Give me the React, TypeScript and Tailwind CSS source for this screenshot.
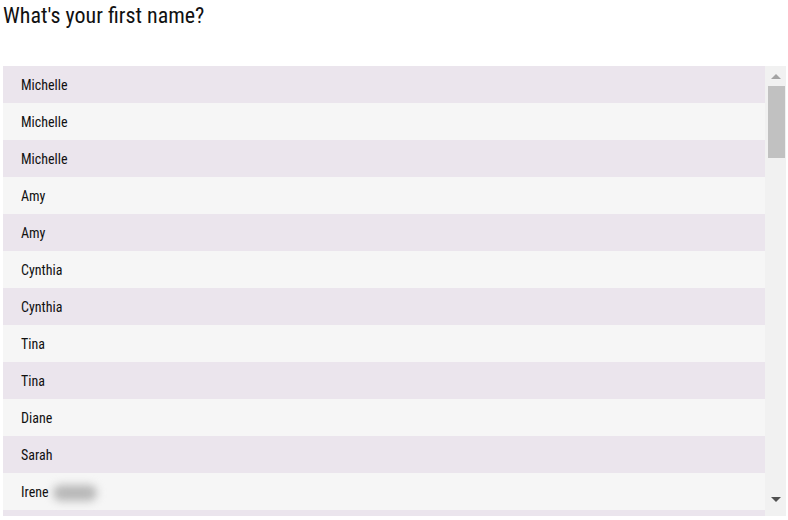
const names = [
  "Michelle",
  "Michelle",
  "Michelle",
  "Amy",
  "Amy",
  "Cynthia",
  "Cynthia",
  "Tina",
  "Tina",
  "Diane",
  "Sarah",
  "Irene",
  "",
];

export default function App() {
  return (
    <div className="w-[788px] h-[520px] bg-white font-['Roboto_Condensed',Roboto,sans-serif] text-[#111]">
      <h1 className="pl-[3px] pt-[3px] text-[22px] leading-[26px] font-normal">
        What's your first name?
      </h1>
      <div className="ml-[3px] mt-[37px] w-[783px] h-[450px] flex overflow-hidden">
        <ul className="flex-1 flex flex-col">
          {names.map((n, i) => (
            <li
              key={i}
              className={
                (i % 2 === 0 ? "bg-[#ebe5ed]" : "bg-[#f6f6f6]") +
                " h-[37px] shrink-0 flex items-center pl-[18px] pt-[2px] text-[14px]"
              }
            >
              {n}
              {n === "Irene" && (
                <span className="ml-[4px] inline-block w-[44px] h-[16px] rounded-full bg-[#b8b8b8] blur-[4px]" />
              )}
            </li>
          ))}
        </ul>
        <div className="w-[21px] h-full bg-[#f1f1f1] flex flex-col items-center">
          <div className="h-[20px] flex items-center justify-center pl-[1px]">
            <div className="w-0 h-0 border-l-[5px] border-r-[5px] border-b-[5px] border-l-transparent border-r-transparent border-b-[#a3a3a3]" />
          </div>
          <div className="w-[17px] h-[72px] bg-[#c1c1c1] ml-[1px]" />
          <div className="flex-1" />
          <div className="h-[20px] flex items-start justify-center pt-[1px] pl-[1px]">
            <div className="w-0 h-0 border-l-[5px] border-r-[5px] border-t-[5px] border-l-transparent border-r-transparent border-t-[#505050]" />
          </div>
        </div>
      </div>
    </div>
  );
}
